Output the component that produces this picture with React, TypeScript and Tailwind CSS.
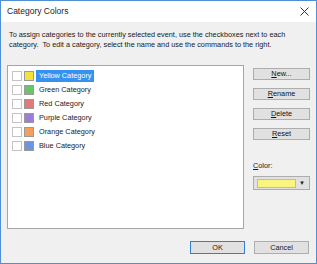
const categories = [
  { name: "Yellow Category", color: "bg-[#f5e13c]", selected: true },
  { name: "Green Category", color: "bg-[#6cc46a]" },
  { name: "Red Category", color: "bg-[#e07a7a]" },
  { name: "Purple Category", color: "bg-[#9a7ed8]" },
  { name: "Orange Category", color: "bg-[#f5a05a]" },
  { name: "Blue Category", color: "bg-[#6d96e0]" },
];

function SideButton({ hot, rest }: { hot: string; rest: string }) {
  return (
    <button className="w-[57px] h-[12px] bg-[#e1e1e1] border border-[#adadad] flex items-center justify-center text-[7.3px] leading-none text-[#111]">
      <span className="underline underline-offset-1">{hot}</span>
      {rest}
    </button>
  );
}

export default function App() {
  return (
    <div
      className="w-[317px] h-[264px] border border-[#4f8fd6] bg-[#f0f0f0] flex flex-col text-[#1a1a1a]"
      style={{ fontFamily: '"Liberation Sans", Arial, sans-serif' }}
    >
      <header className="h-[21px] bg-white flex items-center justify-between pl-[6px] pr-[7px]">
        <span className="text-[8.5px] text-[#222]">Category Colors</span>
        <svg width="9" height="9" viewBox="0 0 9 9" className="text-[#333]">
          <path d="M0.5 0.5 L8.5 8.5 M8.5 0.5 L0.5 8.5" stroke="currentColor" strokeWidth="1" />
        </svg>
      </header>

      <div className="flex-1 flex flex-col pl-[6px] pr-[6px]">
        <p className="mt-[8px] pl-[2px] text-[7.3px] leading-[10px]">
          To assign categories to the currently selected event, use the checkboxes next to each
          <br />
          category.&nbsp; To edit a category, select the name and use the commands to the right.
        </p>

        <div className="mt-[15px] flex gap-[9px]">
          <div className="w-[237px] h-[164px] bg-white border border-[#a6a6a6] pt-[3px] pl-[4px] flex flex-col">
            {categories.map((c) => (
              <div key={c.name} className="h-[14px] flex items-center">
                <span className="w-[10px] h-[10px] bg-white border border-[#c4c4c4]" />
                <span className={`ml-[2px] w-[10px] h-[10px] border border-[#9a9a9a] ${c.color}`} />
                <span
                  className={
                    c.selected
                      ? "ml-[2px] h-[12px] px-[3px] flex items-center bg-[#3592f0] text-white text-[7.3px]"
                      : "ml-[2px] h-[12px] px-[3px] flex items-center text-[7.3px]"
                  }
                >
                  {c.name}
                </span>
              </div>
            ))}
          </div>

          <div className="flex flex-col pt-[3px] gap-[8px]">
            <SideButton hot="N" rest="ew..." />
            <SideButton hot="R" rest="ename" />
            <SideButton hot="D" rest="elete" />
            <SideButton hot="R" rest="eset" />
            <div className="mt-[13px] flex flex-col">
              <span className="text-[7.3px] leading-[10px]">
                <span className="underline underline-offset-1">C</span>olor:
              </span>
              <div className="mt-[5px] w-[57px] h-[14px] bg-[#e1e1e1] border border-[#adadad] flex items-center pl-[3px] pr-[4px]">
                <span className="w-[39px] h-[9px] bg-[#faf57e] border border-[#c9c36a]" />
                <span className="ml-auto text-[6px] leading-none text-[#222]">▼</span>
              </div>
            </div>
          </div>
        </div>

        <div className="mt-[12px] flex justify-end gap-[9px] pr-[1px]">
          <button className="w-[55px] h-[13px] bg-[#e1e1e1] border border-[#2f7fd3] text-[7.3px] leading-none">
            OK
          </button>
          <button className="w-[55px] h-[13px] bg-[#e1e1e1] border border-[#adadad] text-[7.3px] leading-none">
            Cancel
          </button>
        </div>
      </div>
    </div>
  );
}
